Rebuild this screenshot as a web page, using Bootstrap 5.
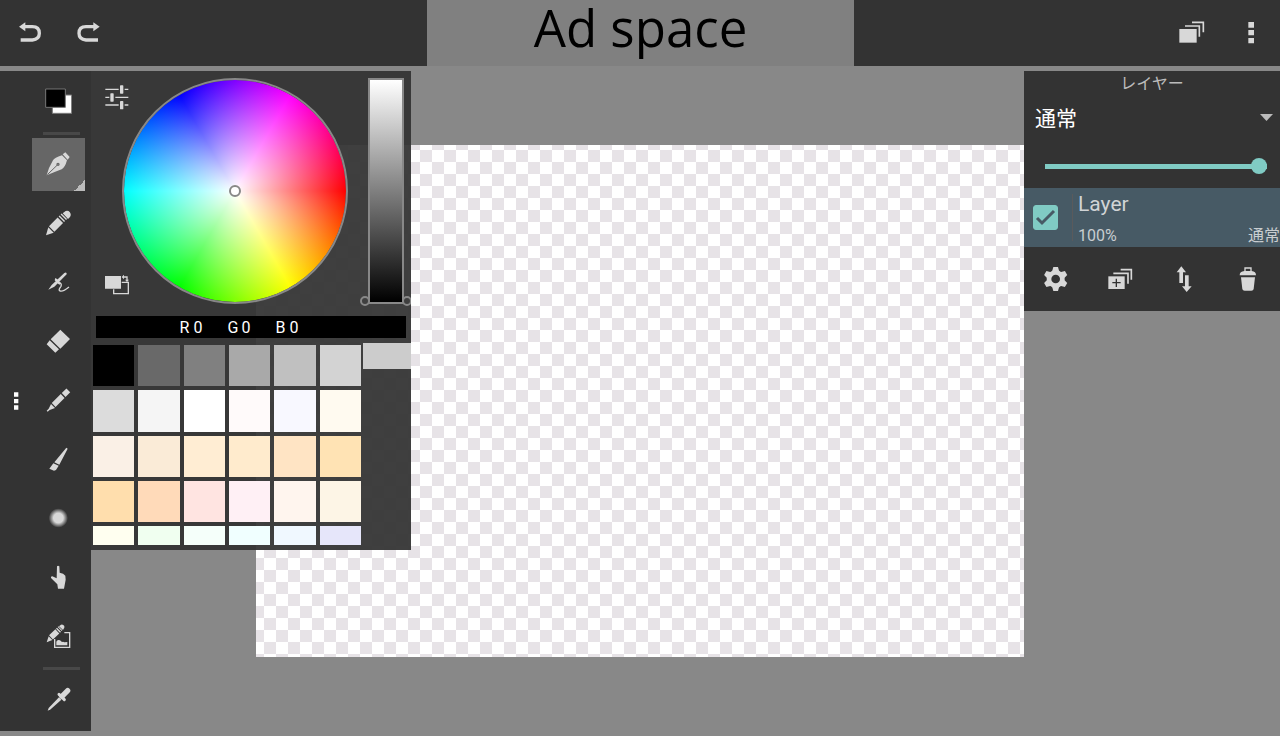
<!DOCTYPE html>
<html lang="ja">
<head>
<meta charset="utf-8">
<meta name="viewport" content="width=device-width, initial-scale=1">
<title>Paint</title>
<link href="https://cdn.jsdelivr.net/npm/bootstrap@5.3.0/dist/css/bootstrap.min.css" rel="stylesheet">
<style>
  :root { --panel: #333; --ink: #d8d8d8; --edge: #888; --accent: #80cbc4; }
  body { background: #888; color: #ccc; font-family: Roboto, "Noto Sans CJK JP", sans-serif; font-size: 16px; line-height: 24px; }
  .panel { background: var(--panel); }
  .icon { width: 28px; height: 28px; display: block; fill: var(--ink); stroke: none; }
  .icon .ln { fill: none; stroke: var(--ink); }
  .icon .cut { stroke: var(--panel); fill: none; }
  .icon-btn { border: 0; padding: 0; background: none; display: grid; place-items: center; }
  .top-bar { height: 66px; }
  .top-bar .icon-btn { width: 58px; height: 66px; }
  .top-side { flex: 1 1 0; gap: 2px; }
  .top-side:first-child { gap: 0; padding-left: 1px; }
  .ad-slot { flex: 1 1 0; background: #808080; color: #000; font-family: "Open Sans", sans-serif; font-size: 51px; line-height: 54px; }

  .workspace { display: grid; grid-template-columns: 91px 320px 1fr 20%; grid-template-rows: 1fr; padding: 5px 0; }
  .workspace > * { grid-row: 1; }
  .artboard { grid-column: 1 / -1; place-self: center; width: 60%; aspect-ratio: 3 / 2;
    background: repeating-conic-gradient(#fff 0 25%, #e7e3e7 0 50%) -16px -7px / 24px 24px; }

  .tool-bar { grid-column: 1; z-index: 1; }
  .tool-list { width: 53px; padding: 4px 0; }
  .tool-list .icon-btn { width: 53px; height: 53px; padding: 0 1px 1px 0; }
  .tool-group { display: flex; flex-direction: column; gap: 6px; }
  .tool-line { width: 37px; height: 3px; margin: 4px 0 3px 11px; border: 0; background: #484848; opacity: 1; }
  .tool-list .icon-btn.active { background: linear-gradient(135deg, transparent 50%, #bbb 50%) right bottom / 11px 11px no-repeat #666; }
  .tool-list .active .cut { stroke: #666; }
  .grip { width: 32px; }

  .color-panel { grid-column: 2; z-index: 1; align-self: start; background: rgba(51, 51, 51, .94); overflow: hidden; }
  .picker { padding: 7px 7px 0 0; height: 245px; }
  .picker-tools { width: 53px; height: 226px; padding: 5px 0 5px 12px; z-index: 1; }
  .picker-tools .icon-btn { width: 28px; }
  .hue-wheel { width: 226px; height: 226px; margin-left: -22px; border: 2px solid var(--edge); border-radius: 50%;
    background: radial-gradient(closest-side, #fff, rgba(255, 255, 255, 0)) padding-box,
      conic-gradient(from 90deg, red, yellow, lime, cyan, blue, magenta, red) padding-box; }
  .ring { width: 12px; height: 12px; border: 2px solid var(--edge); border-radius: 50%; }
  .value-bar { width: 36px; height: 226px; margin-left: 20px; }
  .value-bar input { appearance: none; -webkit-appearance: none; width: 100%; height: 100%; margin: 0; display: block; border: 2px solid var(--edge); background: linear-gradient(#fff, #000); }
  .value-bar input::-webkit-slider-thumb { -webkit-appearance: none; width: 0; height: 0; }
  .value-bar .ring { position: absolute; bottom: -2px; width: 10px; height: 10px; }
  .value-bar .ring-start { left: -8px; }
  .value-bar .ring-end { right: -8px; }
  .rgb-bar { height: 22px; margin: 0 5px; padding-right: 24px; gap: 25px; background: #000; color: #fff; line-height: 24px; }
  .rgb-bar span { display: flex; justify-content: space-between; width: 23px; }
  .swatch-box { margin: 5px 0 3px; }
  .swatches { display: grid; grid-template-columns: repeat(6, 1fr); gap: 4px; height: 200px; margin: 2px; overflow: hidden; align-content: start; }
  .swatches button { border: 0; padding: 0; aspect-ratio: 1; min-width: 0; }
  .swatch-tab { width: 48px; height: 26px; border: 0; background: #ccc; }

  .layer-panel { grid-column: 4; z-index: 1; align-self: start; }
  .layer-panel h2 { margin: 0; font-size: 16px; line-height: 22px; font-weight: 400; color: #bbb; font-family: "Noto Sans CJK JP", sans-serif; }
  .blend-select { display: block; width: 100%; height: 49px; padding: 2px 11px 0; border: 0; color: #fff; font-size: 21px; appearance: none;
    background: no-repeat right 7px center / 13px 7px var(--panel) url("data:image/svg+xml,%3Csvg xmlns='http://www.w3.org/2000/svg' viewBox='0 0 13 7'%3E%3Cpath d='M0 0h13L6.5 7z' fill='%23bbb'/%3E%3C/svg%3E"); }
  .opacity-row { height: 46px; padding: 2px 13px 0 21px; }
  .opacity-row .form-range { height: 16px; }
  .form-range::-webkit-slider-runnable-track { height: 5px; background: var(--accent); border-radius: 0; }
  .form-range::-webkit-slider-thumb { width: 16px; height: 16px; margin-top: -6px; background: var(--accent); }
  .layer-row { height: 59px; background: #475a65; padding-left: 9px; }
  .layer-row .form-check-input { width: 25px; height: 25px; margin: 0; border-radius: 3px; border-color: var(--accent); background-color: var(--accent);
    background-size: 25px; background-image: url("data:image/svg+xml,%3Csvg xmlns='http://www.w3.org/2000/svg' viewBox='0 0 25 25'%3E%3Cpath d='M4 13l5 5L21 6' fill='none' stroke='%23475a65' stroke-width='3'/%3E%3C/svg%3E"); }
  .layer-rule { width: 1px; height: 47px; margin: 0 5px 0 14px; background: #5a5a5c; }
  .layer-name { font-size: 21px; line-height: 32px; color: #d0d4d6; }
  .layer-meta { padding-top: 5px; line-height: 22px; color: #c8cdd0; }
  .layer-actions .icon-btn { flex: 1 1 0; height: 64px; }
</style>
</head>
<body class="d-flex flex-column min-vh-100">

<header class="top-bar d-flex">
  <div class="top-side panel d-flex">
    <button class="icon-btn" aria-label="Undo"><svg class="icon" viewBox="48 57 84 84"><path class="ln" stroke-width="10" d="M62 120H97Q118 118 118 100Q118 80 97 80H74"/><path d="M57 80 76 67V94Z"/></svg></button>
    <button class="icon-btn" aria-label="Redo"><svg class="icon" viewBox="222 57 84 84"><path class="ln" stroke-width="10" d="M294 120H258Q237 118 237 100Q237 80 258 80H282"/><path d="M299 80 280 67V94Z"/></svg></button>
  </div>
  <div class="ad-slot text-center text-nowrap">Ad space</div>
  <div class="top-side panel d-flex justify-content-end">
    <button class="icon-btn" aria-label="Layers"><svg class="icon" viewBox="483 57 84 84"><path d="M490 87h52v41h-52z"/><path class="ln" stroke-width="5" d="M507 78H550V110M528 67H562V97"/></svg></button>
    <button class="icon-btn" aria-label="Menu"><svg class="icon" viewBox="663 57 84 84"><path d="M697 66h17v17h-17zM697 90h17v16h-17zM697 114h17v16h-17z"/></svg></button>
  </div>
</header>

<main class="workspace flex-grow-1">
  <div class="artboard" role="img" aria-label="Canvas"></div>

  <nav class="tool-bar panel d-flex align-items-stretch" aria-label="Tools">
    <button class="icon-btn grip" aria-label="Move toolbar"><svg class="icon" style="fill:#fff" viewBox="6 411 84 84"><path d="M42 427h13v13h-13zM42 447h13v13h-13zM42 466h13v13h-13z"/></svg></button>
    <div class="tool-list">
      <button class="icon-btn" aria-label="Color"><svg class="icon" viewBox="133 64 84 84"><path fill="#fff" stroke="#777" stroke-width="3" d="M158 88h58v55h-58z"/><path fill="#000" stroke="#777" stroke-width="3" d="M138 70h59v55h-59z"/></svg></button>
      <hr class="tool-line">
      <div class="tool-group">
        <button class="icon-btn active" aria-label="Pen"><svg class="icon" viewBox="133 254 84 84"><path d="M141 330 148 308 160 285Q164 277 187 270L202 285Q196 307 186 312L163 321ZM189 267 197 261 210 275 204 283Z"/><path class="cut" stroke-width="3" d="M143 328 172 300"/><circle class="cut" cx="175" cy="297" r="3" stroke-width="4"/></svg></button>
        <button class="icon-btn" aria-label="Crayon"><svg class="icon" viewBox="133 430 84 84"><path d="M139 509 146 485 162 501Z"/><path class="ln" stroke-width="23" d="M156 490 182 464M185 461l3-3M191 455l3-3"/><path d="M189 443 198 436Q205 433 210 439Q216 446 211 454L205 460Z"/></svg></button>
        <button class="icon-btn" aria-label="Calligraphy"><svg class="icon" viewBox="133 55 84 84"><path d="M146 120 156 106 194 70Q202 66 201 74L164 111ZM167 85l5 3 11 12-3 5-5-3-10-10Z"/><path class="ln" stroke-width="4" d="M179 99Q187 102 184 110Q174 122 182 124Q191 126 208 112"/></svg></button>
        <button class="icon-btn" aria-label="Eraser"><svg class="icon" viewBox="133 232 84 84"><path d="M182 240 211 268 182 297 153 269ZM150 272 178 299 167 309 141 284Z"/></svg></button>
        <button class="icon-btn" aria-label="Pencil"><svg class="icon" viewBox="133 409 84 84"><path class="ln" stroke-width="16" d="M206 422 192 436M189 439 162 466"/><path d="M154 463 166 475 150 481 144 486 141 483 147 477Z"/></svg></button>
        <button class="icon-btn" aria-label="Brush"><svg class="icon" viewBox="133 46 84 84"><path d="M200 54 204 57 179 105 164 98ZM161 101 177 108 169 121 163 123 149 117Z"/></svg></button>
        <button class="icon-btn" aria-label="Blur"><svg class="icon" viewBox="133 223 84 84"><radialGradient id="soft"><stop offset=".5" stop-color="#d8d8d8"/><stop offset="1" stop-color="#d8d8d8" stop-opacity="0"/></radialGradient><circle cx="176" cy="265" r="29" fill="url(#soft)"/></svg></button>
        <button class="icon-btn" aria-label="Smudge"><svg class="icon" viewBox="133 400 84 84"><path d="M172 410Q175 406 179 410L180 429Q192 430 197 438L198 450 193 477H175L173 464 154 445Q152 440 158 440L171 446Z"/></svg></button>
        <button class="icon-btn" aria-label="Fill image"><svg class="icon" viewBox="133 37 84 84"><path class="ln" stroke-width="4" d="M165 88V113H210V69H194"/><path d="M170 107V96Q173 88 181 92L187 97Q191 95 194 98L203 97V107Z"/><path d="M141 98 147 80 158 91Z"/><path class="ln" stroke-width="17" d="M154 83 173 65M175 63l3-3M180 58l2-2"/><path d="M178 50 184 45Q190 43 194 49Q196 54 190 61Z"/></svg></button>
      </div>
      <hr class="tool-line">
      <button class="icon-btn" aria-label="Eyedropper"><svg class="icon" viewBox="133 228 84 84"><path d="M144 305 147 297 178 265 185 272 153 301Z"/><path class="ln" stroke-width="9" stroke-linecap="round" d="M178 256 194 272"/><path class="ln" stroke-width="16" stroke-linecap="round" d="M187 262 204 245"/></svg></button>
    </div>
  </nav>

  <section class="color-panel" aria-label="Color">
    <div class="picker d-flex">
      <div class="picker-tools d-flex flex-column justify-content-between flex-shrink-0">
        <button class="icon-btn" aria-label="Color sliders"><svg class="icon" viewBox="41 52 84 84"><path class="ln" stroke-width="4" d="M48 71H88M106 71H117M48 95H60M78 95H117M48 118H88M106 118H117"/><rect x="92" y="59" width="10" height="25" rx="2"/><rect x="63" y="83" width="10" height="25" rx="2"/><rect x="92" y="106" width="10" height="25" rx="2"/></svg></button>
        <button class="icon-btn" aria-label="Swap colors"><svg class="icon" viewBox="41 615 84 84"><path d="M47 630h48v38H47zM97 633l7-7v14zM107 641h12l-6 7z"/><path class="ln" stroke-width="4" d="M73 670V683H117V649H97M102 633H113V642"/></svg></button>
      </div>
      <div class="hue-wheel d-grid flex-shrink-0" style="place-items:center"><span class="ring bg-white"></span></div>
      <div class="value-bar position-relative flex-shrink-0">
        <input type="range" aria-label="Brightness" min="0" max="255" value="0">
        <span class="ring ring-start"></span><span class="ring ring-end"></span>
      </div>
    </div>
    <div class="rgb-bar d-flex justify-content-center"><span><b class="fw-normal">R</b><b class="fw-normal">0</b></span><span><b class="fw-normal">G</b><b class="fw-normal">0</b></span><span><b class="fw-normal">B</b><b class="fw-normal">0</b></span></div>
    <div class="swatch-box d-flex align-items-start">
      <div class="swatches flex-grow-1" id="swatches"></div>
      <button class="swatch-tab" aria-label="Palette menu"></button>
    </div>
  </section>

  <section class="layer-panel panel" aria-labelledby="layer-title">
    <h2 class="text-center" id="layer-title">レイヤー</h2>
    <select class="blend-select" aria-label="Blend mode"><option>通常</option></select>
    <div class="opacity-row d-flex align-items-center"><input type="range" class="form-range" aria-label="Opacity" value="100"></div>
    <div class="layer-row d-flex align-items-center">
      <input class="form-check-input flex-shrink-0" type="checkbox" id="layer1" checked>
      <span class="layer-rule"></span>
      <label class="flex-grow-1" for="layer1">
        <span class="layer-name d-block">Layer</span>
        <span class="layer-meta d-flex justify-content-between"><span>100%</span><span>通常</span></span>
      </label>
    </div>
    <div class="layer-actions d-flex">
      <button class="icon-btn" aria-label="Layer settings"><svg class="icon" viewBox="78 405 84 84"><circle cx="119" cy="447" r="27"/><g id="teeth"><path id="tooth" d="M112 411h14l4 14v44l-4 14h-14l-4-14v-44z"/><use href="#tooth" transform="rotate(60 119 447)"/><use href="#tooth" transform="rotate(120 119 447)"/></g><circle cx="119" cy="447" r="13" fill="#333"/></svg></button>
      <button class="icon-btn" aria-label="Add layer"><svg class="icon" viewBox="270 405 84 84"><path d="M277 439h49v38h-49z"/><path class="ln" stroke-width="5" d="M292 430H336V461M314 419H346V449"/><path class="cut" stroke-width="4" d="M289 458h25M301 446v25"/></svg></button>
      <button class="icon-btn" aria-label="Move layer"><svg class="icon" viewBox="462 405 84 84"><path d="M496 409 510 427H501V459H490V427H482ZM507 436H518V469H527L512 486 498 469H507Z"/></svg></button>
      <button class="icon-btn" aria-label="Delete layer"><svg class="icon" viewBox="654 405 84 84"><path class="ln" stroke-width="4" d="M687 425V414H705V425"/><path d="M671 436Q671 424 685 423H707Q720 424 720 436ZM675 442H717L713 477Q712 482 706 482H686Q680 482 679 477Z"/></svg></button>
    </div>
  </section>
</main>

<script>
  const colors = ['#000000', '#696969', '#808080', '#a9a9a9', '#c0c0c0', '#d3d3d3',
    '#dcdcdc', '#f5f5f5', '#ffffff', '#fffafa', '#f8f8ff', '#fffaf0',
    '#faf0e6', '#faebd7', '#ffedd3', '#ffebcd', '#ffe4c4', '#ffe3b4',
    '#ffdead', '#ffdab9', '#ffe4e1', '#fff0f5', '#fff5ee', '#fdf5e6',
    '#fffff0', '#f0fff0', '#f5fffa', '#f0ffff', '#f0f8ff', '#e6e6fa'];
  document.getElementById('swatches').innerHTML = colors
    .map(c => `<button aria-label="${c}" style="background:${c}"></button>`).join('');
</script>
<script src="https://cdn.jsdelivr.net/npm/bootstrap@5.3.0/dist/js/bootstrap.bundle.min.js"></script>
</body>
</html>
